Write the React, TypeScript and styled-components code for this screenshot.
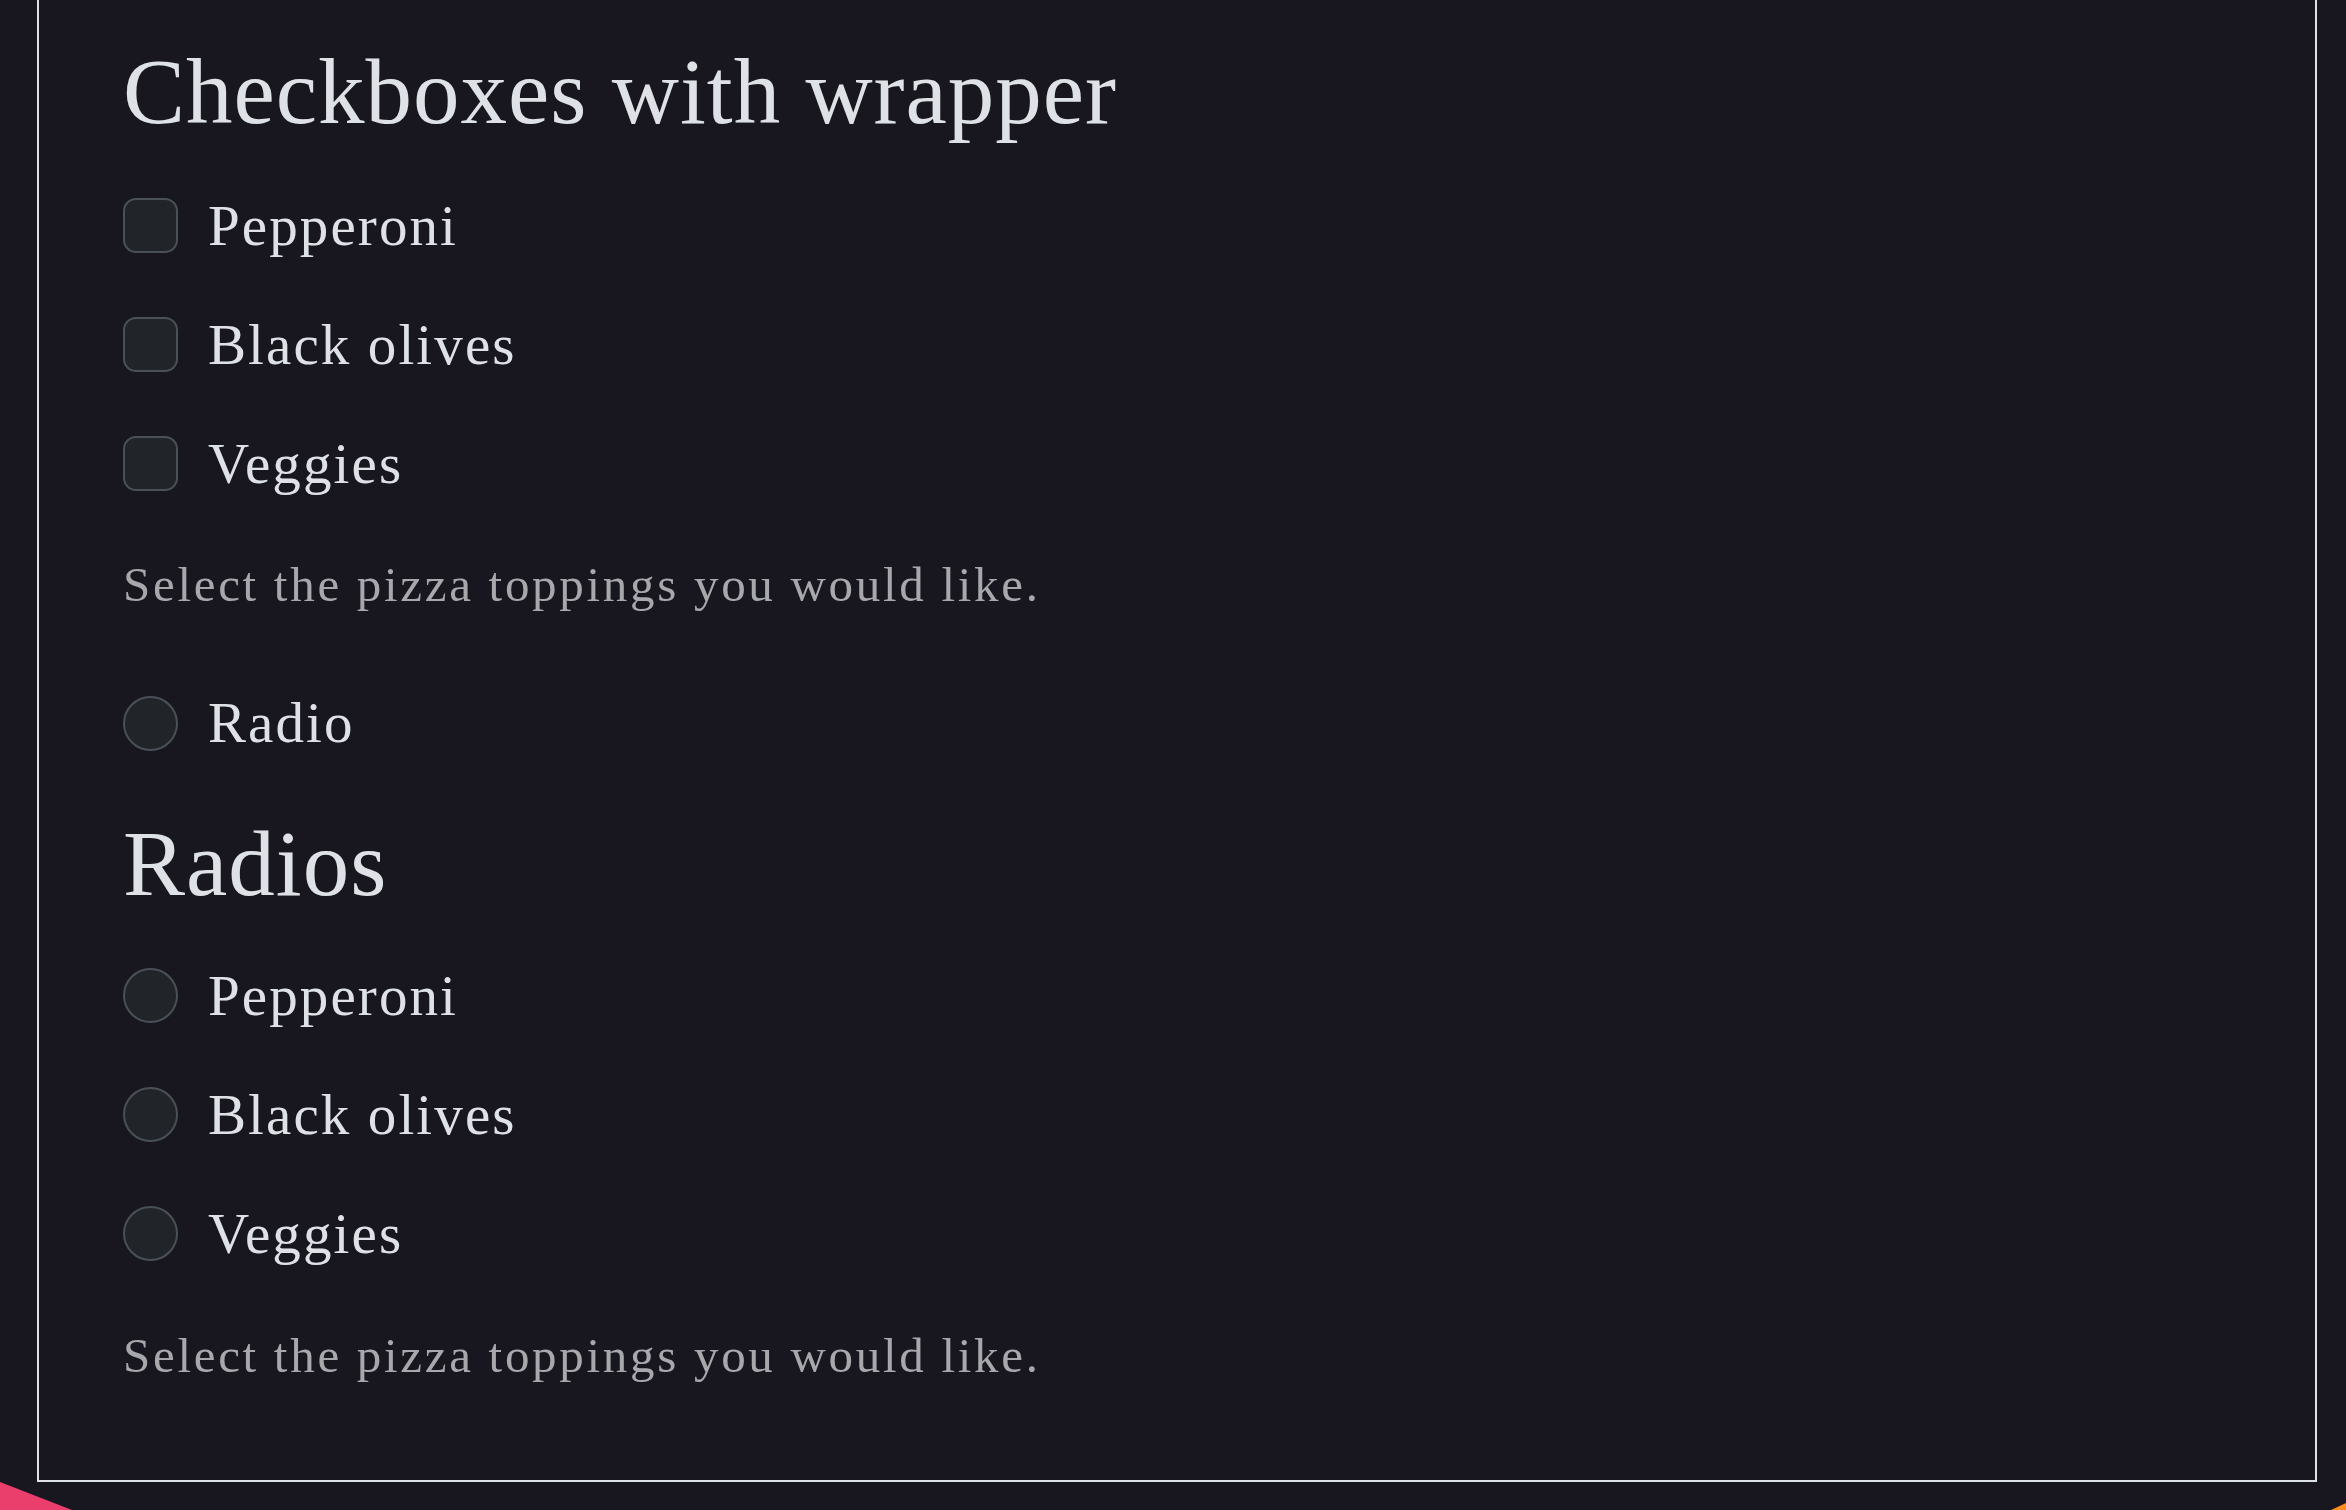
import React from "react";
import styled, { createGlobalStyle } from "styled-components";

const GlobalStyle = createGlobalStyle`
  html, body {
    margin: 0;
    padding: 0;
    background: #18161f;
    height: 1510px;
    overflow: hidden;
  }
  body {
    font-family: "Liberation Serif", "DejaVu Serif", serif;
    color: #dee2e6;
  }
  * { box-sizing: border-box; }
`;

const Page = styled.div`
  position: relative;
  height: 1510px;
  padding: 0 29px 0 37px;
  overflow: hidden;
`;

const Card = styled.main`
  position: relative;
  z-index: 1;
  border: 2px solid #dee2e6;
  border-top: 0;
  padding: 36px 84px 88px 84px;
  display: flex;
  flex-direction: column;
`;

const Heading = styled.h2<{ $gapBefore?: number; $gapAfter: number }>`
  margin: ${(p) => p.$gapBefore ?? 0}px 0 ${(p) => p.$gapAfter}px 0;
  font-family: "Liberation Serif", serif;
  font-weight: 400;
  font-size: 93px;
  line-height: 1.2;
  letter-spacing: 1px;
  color: #dee2e6;
`;

const Group = styled.div`
  display: flex;
  flex-direction: column;
  gap: 35px;
`;

const Row = styled.label`
  display: flex;
  align-items: center;
  height: 84px;
  gap: 30px;
  font-size: 57px;
  line-height: 1.5;
  letter-spacing: 2.1px;
  color: #dee2e6;
  cursor: pointer;
`;

const Box = styled.span<{ $round?: boolean }>`
  flex: none;
  width: 55px;
  height: 55px;
  background: #212529;
  border: 2px solid #4a5057;
  border-radius: ${(p) => (p.$round ? "50%" : "13px")};
`;

const Help = styled.p<{ $gapBefore: number; $gapAfter: number }>`
  margin: ${(p) => p.$gapBefore}px 0 ${(p) => p.$gapAfter}px 0;
  font-size: 49px;
  line-height: 1.5;
  letter-spacing: 2.7px;
  color: #a6a8ac;
`;

const Decor = styled.svg`
  position: absolute;
  left: 0;
  bottom: 0;
  width: 2346px;
  height: 40px;
  z-index: 0;
`;

const toppings = ["Pepperoni", "Black olives", "Veggies"];

export default function App() {
  return (
    <>
      <GlobalStyle />
      <Page>
        <Decor viewBox="0 0 2346 40" aria-hidden="true">
          <polygon points="0,12 72,40 0,40" fill="#ea3e6c" />
          <polygon points="2331,40 2346,33 2346,40" fill="#fb8c1e" />
        </Decor>
        <Card>
          <Heading $gapAfter={36}>Checkboxes with wrapper</Heading>
          <Group>
            {toppings.map((t) => (
              <Row key={t}>
                <Box />
                {t}
              </Row>
            ))}
          </Group>
          <Help $gapBefore={42} $gapAfter={60}>
            Select the pizza toppings you would like.
          </Help>
          <Row>
            <Box $round />
            Radio
          </Row>
          <Heading $gapBefore={43} $gapAfter={34}>
            Radios
          </Heading>
          <Group>
            {toppings.map((t) => (
              <Row key={t}>
                <Box $round />
                {t}
              </Row>
            ))}
          </Group>
          <Help $gapBefore={43} $gapAfter={0}>
            Select the pizza toppings you would like.
          </Help>
        </Card>
      </Page>
    </>
  );
}
